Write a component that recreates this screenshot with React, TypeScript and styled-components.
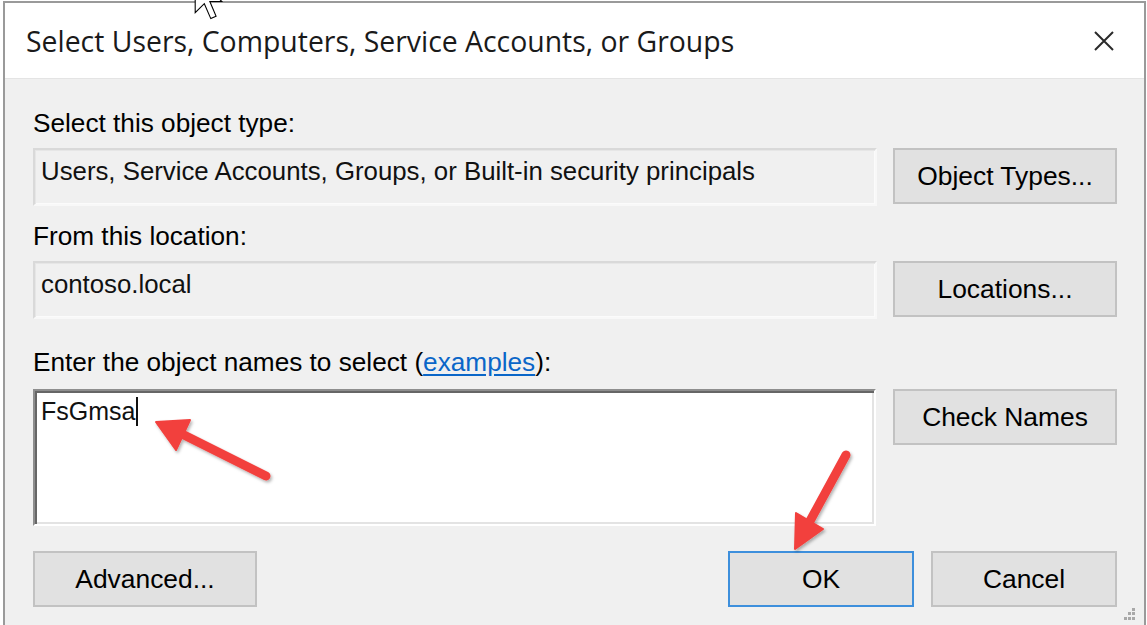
import React from "react";
import styled, { createGlobalStyle } from "styled-components";

const GlobalStyle = createGlobalStyle`
  html, body {
    margin: 0;
    padding: 0;
    background: #ffffff;
    width: 1147px;
    height: 625px;
    overflow: hidden;
  }
  body {
    font-family: "Liberation Sans", Arial, sans-serif;
  }
  * { box-sizing: border-box; }
`;

const Page = styled.div`
  position: relative;
  width: 1147px;
  height: 625px;
  overflow: hidden;
  padding: 1px 0 0 3px;
  background: #ffffff;
`;

const Window = styled.div`
  position: relative;
  width: 1143px;
  height: 660px;
  background: #f0f0f0;
  border: 2px solid #9a9a9a;
  border-bottom: none;
  display: flex;
  flex-direction: column;
`;

const TitleBar = styled.div`
  height: 76px;
  flex: none;
  background: #ffffff;
  border-bottom: 1px solid #e4e4e4;
  display: flex;
  align-items: center;
  justify-content: space-between;
  padding: 0 29px 0 21px;
`;

const TitleText = styled.div`
  font-family: "Open Sans", "Noto Sans", sans-serif;
  font-size: 28.4px;
  color: #1a1a1a;
  padding-top: 1px;
`;

const CloseIcon = styled.svg`
  width: 22px;
  height: 22px;
  display: block;
`;

const Body = styled.div`
  padding: 29px 27px 0 28px;
  display: flex;
  flex-direction: column;
`;

const Section = styled.div<{ $top: number; $rowGap: number }>`
  display: grid;
  grid-template-columns: 844px 224px;
  column-gap: 16px;
  row-gap: ${(p) => p.$rowGap}px;
  margin-top: ${(p) => p.$top}px;
  align-items: start;
`;

const Label = styled.div`
  grid-column: 1 / -1;
  font-size: 26.2px;
  line-height: 30px;
  color: #000;
  white-space: nowrap;
`;

const Link = styled.span`
  color: #0a66c8;
  text-decoration: underline;
  text-underline-offset: 3px;
`;

const ReadOnlyBox = styled.div`
  height: 58px;
  border: 2px solid #d9d9d9;
  border-right-color: #f8f8f8;
  border-bottom-color: #f8f8f8;
  box-shadow: inset 1px 1px 0 #e6e6e6, inset -1px -1px 0 #fbfbfb;
  background: #f0f0f0;
  padding: 6px 6px 0 6px;
  font-size: 25.8px;
  line-height: 30px;
  color: #111;
  white-space: nowrap;
  overflow: hidden;
`;

const NamesBox = styled.div`
  width: 843px;
  height: 137px;
  background: #ffffff;
  border-style: solid;
  border-width: 2px;
  border-color: #8e8e8e #ffffff #ffffff #8e8e8e;
  box-shadow: inset 2px 2px 0 #666666, inset -2px -2px 0 #e3e3e3;
  padding: 5px 6px 0 6px;
  font-size: 25px;
  line-height: 30px;
  color: #111;
`;

const Caret = styled.span`
  display: inline-block;
  width: 2px;
  height: 29px;
  background: #111;
  vertical-align: -6px;
  margin-left: 1px;
`;

const Button = styled.button<{ $default?: boolean; $width?: number }>`
  width: ${(p) => (p.$width ? `${p.$width}px` : "100%")};
  height: 56px;
  background: #e1e1e1;
  border: 2px solid ${(p) => (p.$default ? "#3d8fdc" : "#c2c2c2")};
  font-family: "Liberation Sans", Arial, sans-serif;
  font-size: 26.4px;
  line-height: 30px;
  color: #000;
  padding: 0;
  display: flex;
  align-items: center;
  justify-content: center;
  cursor: default;
`;

const Footer = styled.div`
  margin-top: 25px;
  display: flex;
  justify-content: space-between;
  align-items: center;
`;

const FooterRight = styled.div`
  display: flex;
  gap: 17px;
`;

const Grip = styled.svg`
  position: absolute;
  left: 1113px;
  top: 603px;
  width: 18px;
  height: 16px;
`;

const Overlay = styled.svg`
  position: absolute;
  left: 0;
  top: 0;
  width: 1147px;
  height: 625px;
  pointer-events: none;
`;

const Cursor = styled.svg`
  position: absolute;
  left: 194px;
  top: -27px;
  width: 30px;
  height: 48px;
`;

export default function App() {
  return (
    <>
      <GlobalStyle />
      <Page>
        <Window>
          <TitleBar>
            <TitleText>Select Users, Computers, Service Accounts, or Groups</TitleText>
            <CloseIcon viewBox="0 0 22 22">
              <path d="M2 2 L20 20 M20 2 L2 20" stroke="#2a2a2a" strokeWidth="2" fill="none" />
            </CloseIcon>
          </TitleBar>
          <Body>
            <Section $top={0} $rowGap={10}>
              <Label>Select this object type:</Label>
              <ReadOnlyBox>Users, Service Accounts, Groups, or Built-in security principals</ReadOnlyBox>
              <Button>Object Types...</Button>
            </Section>
            <Section $top={15} $rowGap={10}>
              <Label>From this location:</Label>
              <ReadOnlyBox>contoso.local</ReadOnlyBox>
              <Button>Locations...</Button>
            </Section>
            <Section $top={28} $rowGap={12}>
              <Label>
                Enter the object names to select (<Link>examples</Link>):
              </Label>
              <NamesBox>
                FsGmsa
                <Caret />
              </NamesBox>
              <Button>Check Names</Button>
            </Section>
            <Footer>
              <Button $width={224}>Advanced...</Button>
              <FooterRight>
                <Button $width={186} $default>
                  OK
                </Button>
                <Button $width={186}>Cancel</Button>
              </FooterRight>
            </Footer>
          </Body>
          <Grip viewBox="0 0 18 16">
            <g fill="#a8a8a8">
              <rect x="14" y="2" width="3" height="3" />
              <rect x="10" y="6" width="3" height="3" />
              <rect x="14" y="6" width="3" height="3" />
              <rect x="6" y="11" width="3" height="3" />
              <rect x="10" y="11" width="3" height="3" />
              <rect x="14" y="11" width="3" height="3" />
            </g>
          </Grip>
        </Window>
        <Cursor viewBox="0 0 12.5 20">
          <path
            d="M0.5 0.5 L0.5 16.5 L4.3 12.8 L7 19 L9.2 18 L6.6 11.9 L11.6 11.9 Z"
            fill="#ffffff"
            stroke="#000"
            strokeWidth="0.45"
            strokeLinejoin="miter"
          />
        </Cursor>
        <Overlay viewBox="0 0 1147 625">
          <defs>
            <filter id="shadow" x="-20%" y="-20%" width="140%" height="140%">
              <feDropShadow dx="1.5" dy="2" stdDeviation="1.5" floodColor="#000" floodOpacity="0.3" />
            </filter>
          </defs>
          <g filter="url(#shadow)" fill="#f2403d" stroke="#f2403d">
            <line x1="266" y1="476" x2="182" y2="434" strokeWidth="9" strokeLinecap="round" />
            <polygon points="156,422 190,420 176,450" strokeWidth="2" strokeLinejoin="round" />
            <line x1="846" y1="455" x2="810" y2="521" strokeWidth="9" strokeLinecap="round" />
            <polygon points="795,549 796,513 823,529" strokeWidth="2" strokeLinejoin="round" />
          </g>
        </Overlay>
      </Page>
    </>
  );
}
